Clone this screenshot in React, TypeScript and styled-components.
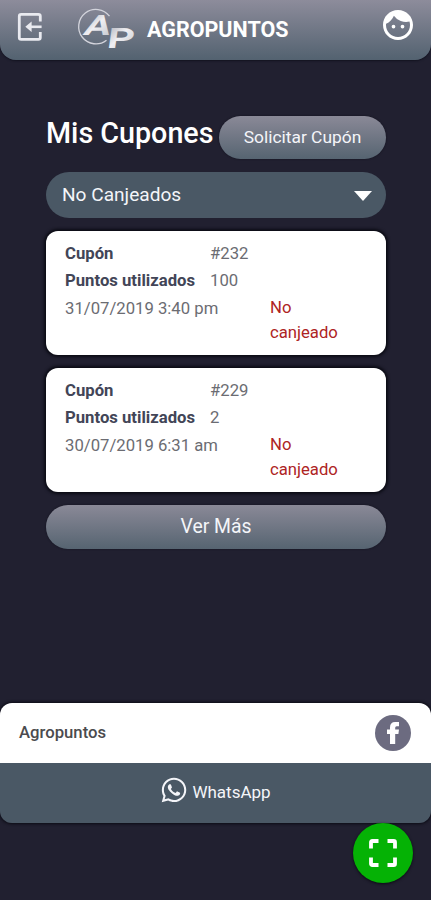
import { useState } from 'react';
import styled, { createGlobalStyle } from 'styled-components';
import { FaWhatsapp } from 'react-icons/fa';
import { MdFace } from 'react-icons/md';

interface Coupon {
  id: number;
  points: number;
  date: string;
  status: string;
}

const coupons: Coupon[] = [
  { id: 232, points: 100, date: '31/07/2019 3:40 pm', status: 'No canjeado' },
  { id: 229, points: 2, date: '30/07/2019 6:31 am', status: 'No canjeado' },
];

const ExitIcon = () => (
  <svg width="26" height="30" viewBox="0 0 26 30" fill="none" stroke="#e9eaf0" strokeWidth="2.8">
    <path d="M23.3 9.5V4.2Q23.3 2.3 21.4 2.3H4.2Q2.3 2.3 2.3 4.2V25.4Q2.3 27.3 4.2 27.3H21.4Q23.3 27.3 23.3 25.4V20" />
    <path d="M24.6 14.8H11" strokeWidth="2.6" />
    <path d="M8.3 14.8L14.6 9.6V20Z" fill="#e9eaf0" stroke="none" />
  </svg>
);

const Logo = () => (
  <svg width="64" height="53" viewBox="0 0 64 53">
    <defs>
      <linearGradient id="silver" x1="0" y1="0" x2="1" y2="1">
        <stop offset="0" stopColor="#a9abb4" />
        <stop offset="0.45" stopColor="#efeff3" />
        <stop offset="1" stopColor="#c0c2c8" />
      </linearGradient>
    </defs>
    <path
      d="M33.5 9.2A17.2 17.2 0 1 0 30.5 33.2"
      fill="none"
      stroke="#d3d4dc"
      strokeWidth="1.3"
    />
    <g fill="url(#silver)" fontFamily="Roboto, sans-serif" fontWeight="700">
      <text transform="translate(6.2 28) skewX(-16) scale(1.42 1)" fontSize="28">
        A
      </text>
      <text transform="translate(30.2 40.5) skewX(-8) scale(1.5 1)" fontSize="28">
        P
      </text>
    </g>
  </svg>
);

const FacebookIcon = () => (
  <svg width="12" height="22" viewBox="0 0 12 22">
    <path
      d="M3 22V12H0V7.6H3V5.5Q3 0 8.2 0H12V4.3H9.6Q8.2 4.3 8.2 5.8V7.6H12L11.4 12H8.2V22Z"
      fill="#ffffff"
    />
  </svg>
);

const ScanIcon = () => (
  <svg width="30" height="30" viewBox="0 0 30 30" fill="none" stroke="#ffffff" strokeWidth="3.8">
    <path d="M3 10.5V4.3Q3 3 4.3 3H10.5" />
    <path d="M19.5 3H25.7Q27 3 27 4.3V10.5" />
    <path d="M27 19.5V25.7Q27 27 25.7 27H19.5" />
    <path d="M10.5 27H4.3Q3 27 3 25.7V19.5" />
  </svg>
);

const App = () => {
  const [filter] = useState('No Canjeados');

  return (
    <>
      <GlobalStyle />
      <Screen>
        <Header>
          <IconButton type="button" aria-label="Salir">
            <ExitIcon />
          </IconButton>
          <Brand>
            <Logo />
            <h1>AGROPUNTOS</h1>
          </Brand>
          <IconButton type="button" aria-label="Perfil">
            <MdFace size={36} />
          </IconButton>
        </Header>

        <Content>
          <TitleRow>
            <h2>Mis Cupones</h2>
            <GradientButton type="button">Solicitar Cupón</GradientButton>
          </TitleRow>
          <FilterSelect type="button">
            {filter}
            <Caret width="18" height="10" viewBox="0 0 18 10">
              <path d="M0 0H18L9 10Z" fill="#ffffff" />
            </Caret>
          </FilterSelect>
          {coupons.map((coupon) => (
            <CouponCard key={coupon.id}>
              <strong>Cupón</strong>
              <span>#{coupon.id}</span>
              <strong>Puntos utilizados</strong>
              <span>{coupon.points}</span>
              <CouponFooter>
                <span>{coupon.date}</span>
                <Status>{coupon.status}</Status>
              </CouponFooter>
            </CouponCard>
          ))}
          <GradientButton type="button" $wide>
            Ver Más
          </GradientButton>
        </Content>

        <Contact>
          <FacebookRow>
            <span>Agropuntos</span>
            <FacebookBadge>
              <FacebookIcon />
            </FacebookBadge>
          </FacebookRow>
          <WhatsappRow>
            <FaWhatsapp size={28} />
            <span>WhatsApp</span>
          </WhatsappRow>
        </Contact>

        <ScanButton type="button" aria-label="Escanear">
          <ScanIcon />
        </ScanButton>
      </Screen>
    </>
  );
};

const GlobalStyle = createGlobalStyle`
  * {
    box-sizing: border-box;
    margin: 0;
  }

  body {
    background-color: #212030;
    font-family: Roboto, 'Liberation Sans', sans-serif;
  }

  button {
    padding: 0;

    border: none;
    background: none;
    color: inherit;
    font-family: inherit;
  }

  svg {
    display: block;
    flex-shrink: 0;
  }
`;

const Screen = styled.div`
  position: relative;

  display: flex;
  flex-direction: column;

  height: 900px;

  overflow: hidden;
  background-color: #212030;
  color: #ffffff;
`;

const Header = styled.header`
  display: flex;
  align-items: flex-start;

  height: 60px;
  padding: 7px 15px 0 17px;

  border-radius: 0 0 16px 16px;
  background: linear-gradient(#8d8c9b, #536270);
  box-shadow: 0 1px 2px #12121f;
`;

const IconButton = styled.button`
  padding-top: 5px;

  color: #ffffff;

  &:last-child {
    padding: 0;
  }
`;

const Brand = styled.div`
  display: flex;
  flex: 1;

  margin-left: 33px;

  h1 {
    margin: 9px 0 0 7px;

    font-size: 21.5px;
    font-weight: 700;
    line-height: 28px;
  }
`;

const Content = styled.main`
  display: flex;
  flex-direction: column;

  padding: 56px 45px 0 46px;
`;

const TitleRow = styled.div`
  display: flex;
  justify-content: space-between;

  margin-bottom: 13px;

  h2 {
    font-size: 28.7px;
    font-weight: 500;
    line-height: 34px;
    white-space: nowrap;
  }
`;

const GradientButton = styled.button<{ $wide?: boolean }>`
  width: ${({ $wide }) => ($wide ? '100%' : '167px')};
  height: ${({ $wide }) => ($wide ? '44px' : '43px')};
  padding-bottom: 1px;

  border-radius: 22px;
  background: linear-gradient(#8a8997, #566471);
  box-shadow: 0 0 2px #11111c;
  color: #f4f5f9;
  font-size: ${({ $wide }) => ($wide ? '19.4px' : '17.4px')};
`;

const FilterSelect = styled.button`
  display: flex;
  align-items: center;
  justify-content: space-between;

  height: 46px;
  margin-bottom: 13px;
  padding: 0 14px 1px 16px;

  border-radius: 23px;
  background-color: #4a5865;
  color: #f4f5f9;
  font-size: 19.1px;
`;

const Caret = styled.svg`
  margin-top: 3px;
`;

const CouponCard = styled.article`
  display: grid;
  grid-template-columns: 145px 1fr;
  grid-template-rows: 27px 28px auto;

  height: 124px;
  margin-bottom: 13px;
  padding: 9px 19px 0;

  border-radius: 12px;
  background-color: #ffffff;
  box-shadow: 0 0 3px 2px #0b0b14;
  color: #6b6c72;
  font-size: 16.7px;
  line-height: 27px;
  white-space: nowrap;

  strong {
    color: #424557;
    font-weight: 700;
  }
`;

const CouponFooter = styled.div`
  grid-column: 1 / -1;
  display: grid;
  grid-template-columns: 205px 72px;
`;

const Status = styled.span`
  color: #ae2424;
  line-height: 25px;
  white-space: normal;
`;

const Contact = styled.footer`
  margin-top: 154px;

  border-radius: 12px;
  box-shadow: 0 0 3px 1px #0b0b14;
  overflow: hidden;
`;

const FacebookRow = styled.div`
  display: flex;
  align-items: center;
  justify-content: space-between;

  height: 60px;
  padding: 0 20px 1px 19px;

  background-color: #ffffff;
  color: #4b4b4e;
  font-size: 16.7px;
  font-weight: 500;
`;

const FacebookBadge = styled.div`
  display: flex;
  align-items: center;
  justify-content: center;

  width: 36px;
  height: 36px;

  border-radius: 50%;
  background-color: #6c6b80;
  color: #ffffff;
`;

const WhatsappRow = styled.div`
  display: flex;
  align-items: center;
  justify-content: center;
  column-gap: 4px;

  height: 60px;
  padding-bottom: 6px;

  background-color: #4a5865;
  color: #f4f5f9;
  font-size: 17px;

  span {
    margin-top: 3px;
  }
`;

const ScanButton = styled.button`
  position: absolute;
  right: 18px;
  bottom: 17px;

  display: flex;
  align-items: center;
  justify-content: center;

  width: 60px;
  height: 60px;

  border-radius: 50%;
  background-color: #05b205;
  box-shadow: 0 1px 3px #0b0b14;
`;

export default App;
